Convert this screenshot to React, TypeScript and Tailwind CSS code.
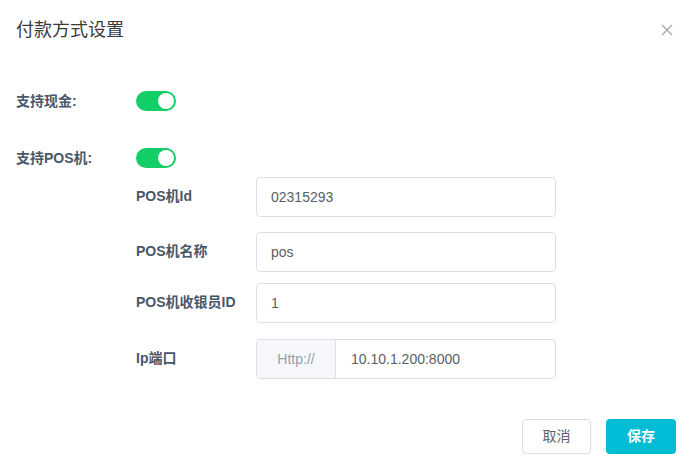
import React from "react";

const font = { fontFamily: '"Liberation Sans", Arial, "Noto Sans CJK SC", sans-serif' };

function Toggle() {
  return (
    <div className="relative w-[40px] h-[20px] rounded-full bg-[#13ce66]">
      <div className="absolute right-[2px] top-[2px] w-[16px] h-[16px] rounded-full bg-white" />
    </div>
  );
}

function Field({ label, value, mt }: { label: string; value: string; mt: string }) {
  return (
    <div className={`flex items-center ${mt}`}>
      <div className="w-[120px] text-[14px] font-bold text-[#48576a] leading-[20px] -mt-[2px]">{label}</div>
      <div className="w-[300px] h-[40px] rounded-[4px] border border-[#dcdfe6] flex items-center px-[14px] text-[14px] text-[#5a5e66]">
        {value}
      </div>
    </div>
  );
}

export default function App() {
  return (
    <div className="w-[696px] h-[470px] bg-white relative" style={font}>
      <div className="pt-[18px] px-[16px] flex items-center justify-between">
        <div className="text-[18px] leading-[24px] text-[#3a3a3a]">付款方式设置</div>
        <svg width="12" height="12" viewBox="0 0 12 12" className="mr-[7px]">
          <path d="M1 1L11 11M11 1L1 11" stroke="#a0a4ab" strokeWidth="1.2" />
        </svg>
      </div>

      <div className="px-[16px]">
        <div className="flex items-center mt-[49px] h-[20px]">
          <div className="w-[120px] text-[14px] font-bold text-[#48576a]">支持现金:</div>
          <Toggle />
        </div>
        <div className="flex items-center mt-[37px] h-[20px]">
          <div className="w-[120px] text-[14px] font-bold text-[#48576a]">支持POS机:</div>
          <Toggle />
        </div>

        <div className="pl-[120px]">
          <Field label="POS机Id" value="02315293" mt="mt-[9px]" />
          <Field label="POS机名称" value="pos" mt="mt-[15px]" />
          <Field label="POS机收银员ID" value="1" mt="mt-[11px]" />
          <div className="flex items-center mt-[16px]">
            <div className="w-[120px] text-[14px] font-bold text-[#48576a] leading-[20px] -mt-[2px]">Ip端口</div>
            <div className="w-[300px] h-[40px] rounded-[4px] border border-[#dcdfe6] flex text-[14px]">
              <div className="w-[79px] h-full bg-[#f5f7fa] border-r border-[#dcdfe6] rounded-l-[4px] flex items-center justify-center text-[#97a0ab]">
                Http://
              </div>
              <div className="flex items-center pl-[15px] text-[#5a5e66]">10.10.1.200:8000</div>
            </div>
          </div>
        </div>
      </div>

      <div className="flex justify-end gap-[15px] pr-[20px] mt-[40px]">
        <button className="w-[69px] h-[35px] rounded-[4px] border border-[#dcdfe6] bg-white text-[14px] text-[#606266]">
          取消
        </button>
        <button className="w-[70px] h-[35px] rounded-[4px] bg-[#00bcd4] text-[14px] font-bold text-white">
          保存
        </button>
      </div>
    </div>
  );
}
